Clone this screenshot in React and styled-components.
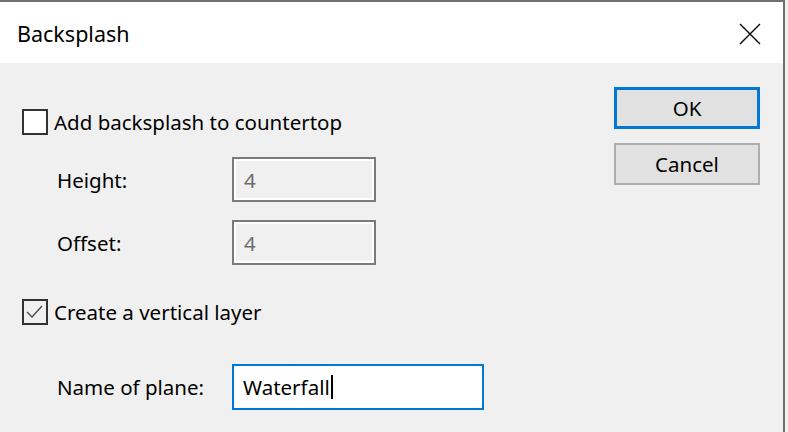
import React from 'react'
import styled, { createGlobalStyle } from 'styled-components'

const GlobalStyle = createGlobalStyle`
    html, body {
        margin: 0;
        padding: 0;
        background: #f0f0f0;
    }
    body {
        width: 788px;
        height: 432px;
        overflow: hidden;
        font-family: "Noto Sans", "Open Sans", sans-serif;
        font-size: 20.5px;
        color: #000;
    }
`

const Window = styled.div`
    width: 783px;
    height: 432px;
    border-top: 2px solid #707070;
    border-right: 2px solid #707070;
    background: #f0f0f0;
    display: flex;
    flex-direction: column;
`

const TitleBar = styled.div`
    height: 61px;
    background: #fff;
    display: flex;
    align-items: center;
    justify-content: space-between;
    padding: 2px 22px 0 17px;
    box-sizing: border-box;
`

const Title = styled.span`
    font-size: 21.5px;
`

const Body = styled.div`
    flex: 1;
    display: flex;
    justify-content: space-between;
    padding: 24px 23px 0 22px;
`

const Form = styled.div`
    display: flex;
    flex-direction: column;
    padding-top: 22px;
`

const CheckRow = styled.label`
    display: flex;
    align-items: center;
    gap: 6px;
    height: 26px;
    margin-top: ${p => p.$top || 0}px;
`

const Box = styled.span`
    width: 26px;
    height: 26px;
    box-sizing: border-box;
    border: 2px solid #333;
    background: ${p => (p.$checked ? 'transparent' : '#fff')};
    display: flex;
    align-items: center;
    justify-content: center;
`

const FieldRow = styled.div`
    display: grid;
    grid-template-columns: 175px auto;
    align-items: center;
    padding-left: 35px;
    margin-top: ${p => p.$top || 0}px;
`

const TextBox = styled.div`
    width: ${p => p.$width}px;
    height: ${p => p.$height}px;
    box-sizing: border-box;
    display: flex;
    align-items: center;
    padding-left: ${p => (p.$disabled ? 10 : 9)}px;
    ${p =>
        p.$disabled
            ? `
        border: 2px solid #7a7a7a;
        box-shadow: inset 0 0 0 2px #fff;
        background: #f0f0f0;
        color: #6d6d6d;
    `
            : `
        border: 2px solid #0078d7;
        background: #fff;
        color: #000;
    `}
`

const Caret = styled.span`
    display: inline-block;
    width: 2px;
    height: 24px;
    margin-left: 1px;
    background: #000;
`

const Buttons = styled.div`
    display: flex;
    flex-direction: column;
    gap: 14px;
`

const Button = styled.button`
    width: 146px;
    height: 42px;
    box-sizing: border-box;
    background: #e1e1e1;
    border: ${p => (p.$default ? '3px solid #0078d7' : '2px solid #adadad')};
    font: inherit;
    color: #000;
    padding: 0;
    margin: 0;
`

const CloseIcon = () => (
    <svg width="22" height="22" viewBox="0 0 22 22">
        <path d="M1 1 L21 21 M21 1 L1 21" stroke="#000" strokeWidth="1.4" fill="none" />
    </svg>
)

const Check = () => (
    <svg width="22" height="22" viewBox="0 0 22 22">
        <path d="M3 11 L8 16 L18 5" stroke="#4a4a4a" strokeWidth="1.4" fill="none" />
    </svg>
)

const App = () => {
    return (
        <>
            <GlobalStyle />
            <Window>
                <TitleBar>
                    <Title>Backsplash</Title>
                    <CloseIcon />
                </TitleBar>
                <Body>
                    <Form>
                        <CheckRow>
                            <Box />
                            Add backsplash to countertop
                        </CheckRow>
                        <FieldRow $top={22}>
                            <span>Height:</span>
                            <TextBox $disabled $width={144} $height={45}>4</TextBox>
                        </FieldRow>
                        <FieldRow $top={18}>
                            <span>Offset:</span>
                            <TextBox $disabled $width={144} $height={45}>4</TextBox>
                        </FieldRow>
                        <CheckRow $top={34}>
                            <Box $checked>
                                <Check />
                            </Box>
                            Create a vertical layer
                        </CheckRow>
                        <FieldRow $top={39}>
                            <span>Name of plane:</span>
                            <TextBox $width={252} $height={46}>
                                Waterfall<Caret />
                            </TextBox>
                        </FieldRow>
                    </Form>
                    <Buttons>
                        <Button $default>OK</Button>
                        <Button>Cancel</Button>
                    </Buttons>
                </Body>
            </Window>
        </>
    )
}

export default App
